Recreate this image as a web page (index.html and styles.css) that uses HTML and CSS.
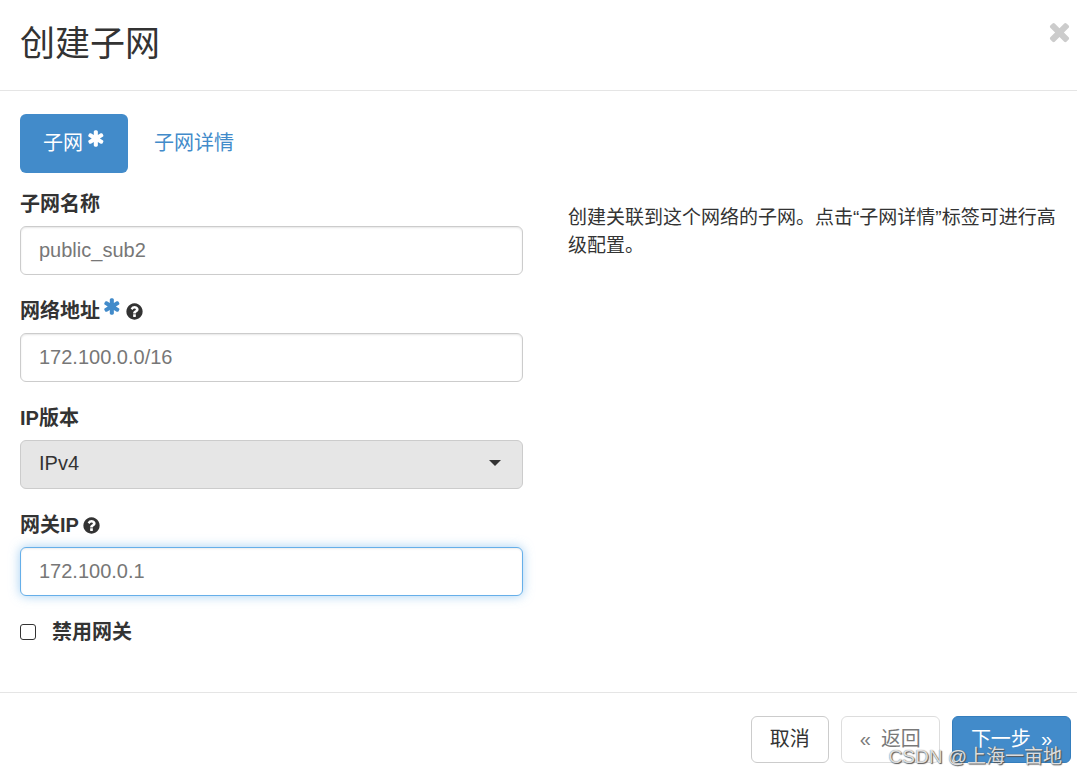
FILE: index.html
```html
<!DOCTYPE html>
<html lang="zh-CN">
<head>
<meta charset="utf-8">
<meta name="viewport" content="width=device-width, initial-scale=1">
<title>创建子网</title>
<link rel="stylesheet" href="styles.css">
</head>
<body>
<svg class="sprite" aria-hidden="true">
  <symbol id="asterisk" viewBox="0 0 1792 1792"><path d="M1482 1050q46 26 59.5 77.5t-12.5 97.5l-64 110q-26 46-77.5 59.5t-97.5-12.5l-266-153v307q0 52-38 90t-90 38h-128q-52 0-90-38t-38-90v-307l-266 153q-46 26-97.5 12.5t-77.5-59.5l-64-110q-26-46-12.5-97.5t59.5-77.5l266-154-266-154q-46-26-59.5-77.5t12.5-97.5l64-110q26-46 77.5-59.5t97.5 12.5l266 153v-307q0-52 38-90t90-38h128q52 0 90 38t38 90v307l266-153q46-26 97.5-12.5t77.5 59.5l64 110q26 46 12.5 97.5t-59.5 77.5l-266 154z"/></symbol>
  <symbol id="question" viewBox="0 0 1792 1792"><path d="M1024 1376v-192q0-14-9-23t-23-9h-192q-14 0-23 9t-9 23v192q0 14 9 23t23 9h192q14 0 23-9t9-23zm256-672q0-88-55.5-163t-138.5-116-170-41q-243 0-371 213-15 24 8 42l132 100q7 6 19 6 16 0 25-12 53-68 86-92 34-24 86-24 48 0 85.5 26t37.5 59q0 38-20 61t-68 45q-63 28-115.5 86.5t-52.5 125.5v36q0 14 9 23t23 9h192q14 0 23-9t9-23q0-19 21.5-49.5t54.5-49.5q32-18 49-28.5t46-35 44.5-48 28-60.5 12.5-81zm384 192q0 209-103 385.5t-279.5 279.5-385.5 103-385.5-103-279.5-279.5-103-385.5 103-385.5 279.5-279.5 385.5-103 385.5 103 279.5 279.5 103 385.5z"/></symbol>
  <symbol id="times" viewBox="0 0 1792 1792"><path d="M1490 1322q0 40-28 68l-136 136q-28 28-68 28t-68-28l-294-294-294 294q-28 28-68 28t-68-28l-136-136q-28-28-28-68t28-68l294-294-294-294q-28-28-28-68t28-68l136-136q28-28 68-28t68 28l294 294 294-294q28-28 68-28t68 28l136 136q28 28 28 68t-28 68l-294 294 294 294q28 28 28 68z"/></symbol>
</svg>
<main class="modal">
  <header class="modal-header">
    <h1 class="title">创建子网</h1>
    <button class="close" type="button" aria-label="关闭"><svg class="close-icon"><use href="#times"/></svg></button>
  </header>
  <form>
    <div class="modal-body">
      <nav class="tabs">
        <a class="tab active" href="#subnet">子网<svg class="icon raised"><use href="#asterisk"/></svg></a>
        <a class="tab" href="#details">子网详情</a>
      </nav>
      <div class="columns">
        <div class="fields">
          <div class="field">
            <label class="label" for="name">子网名称</label>
            <input class="control" id="name" type="text" value="public_sub2">
          </div>
          <div class="field">
            <div class="label-row">
              <label class="label" for="cidr">网络地址</label>
              <svg class="icon raised required"><use href="#asterisk"/></svg>
              <svg class="icon"><use href="#question"/></svg>
            </div>
            <input class="control" id="cidr" type="text" value="172.100.0.0/16">
          </div>
          <div class="field">
            <label class="label" for="version">IP版本</label>
            <div class="select-wrap">
              <select class="control select" id="version"><option>IPv4</option><option>IPv6</option></select>
              <svg class="caret" viewBox="0 0 12 6"><path d="M0 0H12L6 6Z"/></svg>
            </div>
          </div>
          <div class="field">
            <div class="label-row">
              <label class="label" for="gateway">网关IP</label>
              <svg class="icon"><use href="#question"/></svg>
            </div>
            <input class="control focused" id="gateway" type="text" value="172.100.0.1">
          </div>
          <div class="check-row">
            <input class="checkbox" id="no-gateway" type="checkbox">
            <label class="label" for="no-gateway">禁用网关</label>
          </div>
        </div>
        <p class="help">创建关联到这个网络的子网。点击“子网详情”标签可进行高级配置。</p>
      </div>
    </div>
    <footer class="modal-footer">
      <button class="btn" type="button">取消</button>
      <button class="btn" type="button" disabled><span>«</span><span>返回</span></button>
      <button class="btn primary" type="button"><span>下一步</span><span>»</span></button>
      <span class="watermark">CSDN @上海一亩地</span>
    </footer>
  </form>
</main>
</body>
</html>
```
FILE: styles.css
```css
* {
  box-sizing: border-box;
}

body {
  margin: 0;
  background: #fff;
  color: #333;
  font: 20px/28px "Liberation Sans", "Noto Sans CJK SC", sans-serif;
}

.sprite {
  position: absolute;
  width: 0;
  height: 0;
}

svg {
  fill: currentColor;
}

.modal-header {
  display: flex;
  justify-content: space-between;
  align-items: flex-start;
  padding: 17px 3px 19px 20px;
  border-bottom: 1px solid #e5e5e5;
}

.title {
  margin: 0;
  font-size: 35px;
  line-height: 54px;
  font-weight: 400;
}

.close {
  display: flex;
  padding: 0;
  border: 0;
  background: none;
  color: #ccc;
}

.close-icon {
  width: 29px;
  height: 29px;
}

.modal-body {
  padding: 23px 6px 46px 20px;
}

.tabs {
  display: flex;
  gap: 3px;
}

.tab {
  display: flex;
  align-items: center;
  gap: 4px;
  height: 59px;
  padding: 0 23px 2px;
  border-radius: 6px;
  color: #428bca;
  text-decoration: none;
}

.tab.active {
  padding-right: 22px;
  background: #428bca;
  color: #fff;
}

.icon {
  flex: none;
  width: 19px;
  height: 19px;
}

.raised {
  margin-bottom: 9px;
}

.required {
  color: #428bca;
}

.columns {
  display: grid;
  grid-template-columns: 1fr 1fr;
  gap: 45px;
  padding-top: 17px;
}

.fields {
  display: flex;
  flex-direction: column;
  gap: 22px;
}

.field {
  display: flex;
  flex-direction: column;
  gap: 8px;
}

.label {
  font-weight: 700;
}

.label-row {
  display: flex;
  align-items: center;
  gap: 3px;
}

.control {
  width: 100%;
  height: 49px;
  padding: 0 18px 1px;
  border: 1px solid #ccc;
  border-radius: 6px;
  outline: 0;
  background: #fff;
  box-shadow: inset 0 1px 2px rgba(0, 0, 0, 0.1);
  color: #777;
  font: inherit;
}

.focused {
  border-color: #66afe9;
  box-shadow: inset 0 1px 2px rgba(0, 0, 0, 0.08), 0 0 11px rgba(102, 175, 233, 0.6);
}

.select-wrap {
  position: relative;
}

.select {
  display: block;
  padding-bottom: 3px;
  appearance: none;
  background: #e6e6e6;
  box-shadow: none;
  color: #333;
}

.caret {
  position: absolute;
  top: 20px;
  right: 22px;
  width: 12px;
  height: 6px;
  pointer-events: none;
}

.check-row {
  display: flex;
  align-items: center;
  gap: 16px;
}

.checkbox {
  appearance: none;
  width: 16px;
  height: 16px;
  margin: 0;
  border: 1px solid #333;
  border-radius: 3px;
}

.help {
  margin: 14px 0 0;
  font-size: 19px;
}

.modal-footer {
  position: relative;
  display: flex;
  justify-content: flex-end;
  gap: 12px;
  padding: 23px 6px 13px;
  border-top: 1px solid #e5e5e5;
}

.btn {
  display: flex;
  align-items: center;
  gap: 10px;
  height: 47px;
  padding: 0 18px 1px;
  border: 1px solid #ccc;
  border-radius: 6px;
  background: #fff;
  color: #333;
  font: inherit;
}

.btn:disabled {
  opacity: 0.65;
}

.primary {
  border-color: #357ebd;
  background: #428bca;
  color: #fff;
}

.watermark {
  position: absolute;
  right: 15px;
  bottom: 5px;
  color: rgba(255, 255, 255, 0.8);
  text-shadow: 1px 1px 1px #555, 0 0 1px #666;
  font-size: 19px;
  pointer-events: none;
}
```
